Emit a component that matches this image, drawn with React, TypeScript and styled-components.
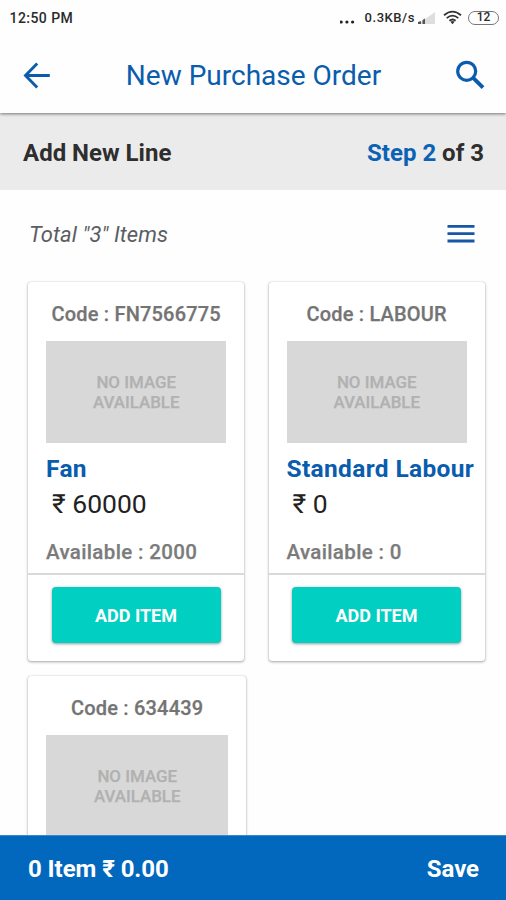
import React from "react";
import styled, { createGlobalStyle } from "styled-components";

const BLUE = "#0a5cad";

const GlobalStyle = createGlobalStyle`
  * { box-sizing: border-box; }
  body { margin: 0; background: #fefefe; font-family: Roboto, "Noto Sans", sans-serif; }
`;

const Screen = styled.div`
  width: 506px;
  height: 900px;
  display: flex;
  flex-direction: column;
  overflow: hidden;
  background: #fefefe;
`;

const StatusBar = styled.div`
  height: 36px;
  flex: none;
  display: flex;
  align-items: center;
  padding: 0 7px 1px 9.5px;
  color: #2a2a2a;
  font-size: 14px;
  font-weight: 500;
  white-space: nowrap;
`;

const Clock = styled.span`
  letter-spacing: 0.45px;
  margin-right: auto;
`;

const Speed = styled.span`
  font-size: 13px;
  letter-spacing: 0.55px;
  margin: 0 3px 0 9px;
`;

const WifiIcon = styled.svg`
  margin: 0 6px 0 7px;
`;

const Battery = styled.span`
  width: 31px;
  height: 14px;
  border: 1.5px solid #777;
  border-radius: 7px;
  display: flex;
  align-items: center;
  justify-content: center;
  font-size: 12px;
  line-height: 11px;
`;

const AppBar = styled.header`
  height: 77px;
  flex: none;
  display: flex;
  align-items: center;
  justify-content: space-between;
  padding: 1px 18px 0 19px;
  position: relative;
  color: ${BLUE};
  background: #fefefe;
  box-shadow: 0 1px 3px rgba(0, 0, 0, 0.5);
  clip-path: inset(0 0 -8px 0);
`;

const Title = styled.h1`
  margin: 0;
  padding-top: 1px;
  font-size: 28px;
  line-height: 36px;
  font-weight: 400;
`;

const StepBar = styled.div`
  height: 77px;
  flex: none;
  display: flex;
  align-items: center;
  justify-content: space-between;
  padding: 2px 22px 0 23px;
  background: #ebebeb;
  color: #2e2e2e;
  font-size: 24px;
  font-weight: 700;
`;

const StepNumber = styled.span`
  color: #0b62b4;
`;

const Summary = styled.div`
  height: 92px;
  flex: none;
  display: flex;
  align-items: center;
  justify-content: space-between;
  padding: 0 31px 4px 29px;
  color: #5b5d62;
  font-size: 22px;
  font-style: italic;
  letter-spacing: 0.08px;
`;

const Grid = styled.main`
  flex: 1;
  min-height: 0;
  display: grid;
  grid-template-columns: 216px 216px;
  grid-template-rows: 379px 379px;
  gap: 15px 24.5px;
  padding: 0 0 0 28px;
`;

const Card = styled.article<{ $wide?: boolean }>`
  width: ${(p) => (p.$wide ? 218 : 216)}px;
  background: #fff;
  border-radius: 3px;
  box-shadow: 0 1px 3px rgba(0, 0, 0, 0.34), 0 0 1px rgba(0, 0, 0, 0.25);
  display: flex;
  flex-direction: column;
`;

const Details = styled.div`
  height: 293px;
  padding: 0 17.6px 0 18px;
  border-bottom: 2px solid #d9d9d9;
  display: flex;
  flex-direction: column;
  white-space: nowrap;
`;

const Code = styled.div`
  height: 59px;
  flex: none;
  padding-top: 5px;
  line-height: 55px;
  text-align: center;
  color: #747474;
  font-size: 20px;
  font-weight: 500;
  letter-spacing: 0.18px;
  -webkit-text-stroke: 0.25px currentColor;
`;

const Placeholder = styled.div`
  height: 102px;
  flex: none;
  background: #d8d8d8;
  color: #b1b1b1;
  display: flex;
  align-items: center;
  justify-content: center;
  text-align: center;
  font-size: 16.9px;
  line-height: 20px;
  font-weight: 500;
  -webkit-text-stroke: 0.25px currentColor;
`;

const Name = styled.div`
  margin-top: 9px;
  color: ${BLUE};
  font-size: 24.5px;
  line-height: 34px;
  font-weight: 700;
  letter-spacing: 0.35px;
`;

const Price = styled.div`
  padding-left: 6px;
  color: #222;
  font-size: 26.5px;
  line-height: 36px;
`;

const Stock = styled.div`
  margin-top: 15px;
  color: #7b7b7b;
  font-size: 20.5px;
  line-height: 30px;
  font-weight: 500;
  letter-spacing: 0.35px;
  -webkit-text-stroke: 0.25px currentColor;
`;

const AddButton = styled.button`
  width: 169px;
  height: 56px;
  margin: 12px 0 0 23.5px;
  border: 0;
  border-radius: 4px;
  background: #00cfc1;
  color: #fff;
  font: 700 18px/56px Roboto, sans-serif;
  padding: 1px 0 0;
  box-shadow: 0 1px 3px rgba(0, 0, 0, 0.4);
`;

const Footer = styled.footer`
  height: 65px;
  flex: none;
  position: relative;
  display: flex;
  align-items: center;
  justify-content: space-between;
  padding: 2px 27px 0 28px;
  border-top: 1px solid #3d87c5;
  background: #0168bd;
  color: #fff;
  font-size: 24px;
  font-weight: 700;
  letter-spacing: -0.06px;
`;

const items = [
  { code: "FN7566775", name: "Fan", price: "60000", stock: "2000" },
  { code: "LABOUR", name: "Standard Labour", price: "0", stock: "0" },
  { code: "634439", name: "", price: "", stock: "" },
];

function StatusIcons() {
  return (
    <>
      <svg width="16" height="14" viewBox="0 0 16 14" fill="#222">
        <circle cx="1.2" cy="11" r="1.6" />
        <circle cx="6.9" cy="11" r="1.6" />
        <circle cx="12.6" cy="11" r="1.6" />
      </svg>
      <Speed>0.3KB/s</Speed>
      <svg width="18" height="14" viewBox="0 0 18 14">
        <path d="M0 13 17 1V13Z" fill="#dedede" />
        <path d="M0 13V11L3 10V13ZM4.5 13V9L7 7.5V13Z" fill="#555" />
      </svg>
      <WifiIcon width="19" height="15" viewBox="0 0 19 15" fill="none" stroke="#333" strokeWidth="1.8">
        <path d="M1 5.3Q9.5-2 18 5.3M3.7 8.1Q9.5 3.2 15.3 8.1M6.4 10.8Q9.5 8.2 12.6 10.8" />
        <path d="M7.4 11.7 9.5 14.2 11.6 11.7Q9.5 10.2 7.4 11.7Z" fill="#333" stroke="none" />
      </WifiIcon>
      <Battery>12</Battery>
    </>
  );
}

export default function App() {
  return (
    <Screen>
      <GlobalStyle />
      <StatusBar>
        <Clock>12:50 PM</Clock>
        <StatusIcons />
      </StatusBar>
      <AppBar>
        <svg width="36" height="36" viewBox="0 0 36 36" fill="none" stroke={BLUE} strokeWidth="2.9">
          <path d="M30.8 18.5H7M18.2 6.6 6.5 18.5 18.2 30.4" />
        </svg>
        <Title>New Purchase Order</Title>
        <svg width="36" height="36" viewBox="0 0 36 36" fill="none" stroke={BLUE}>
          <circle cx="14.7" cy="14.3" r="9" strokeWidth="3.2" />
          <path d="M21.2 20.8 31 30.6" strokeWidth="3.9" />
        </svg>
      </AppBar>
      <StepBar>
        <span>Add New Line</span>
        <span><StepNumber>Step 2</StepNumber> of 3</span>
      </StepBar>
      <Summary>
        <span>Total "3" Items</span>
        <svg width="28" height="20" viewBox="0 0 28 20" stroke="#1756a8" strokeWidth="2.8">
          <path d="M.5 2.4H27.5M.5 9.7H27.5M.5 17H27.5" />
        </svg>
      </Summary>
      <Grid>
        {items.map((item, i) => (
          <Card key={item.code} $wide={i === 2}>
            <Details>
              <Code>Code : {item.code}</Code>
              <Placeholder>NO IMAGE<br />AVAILABLE</Placeholder>
              {item.name && (
                <>
                  <Name>{item.name}</Name>
                  <Price>₹ {item.price}</Price>
                  <Stock>Available : {item.stock}</Stock>
                </>
              )}
            </Details>
            {item.name && <AddButton>ADD ITEM</AddButton>}
          </Card>
        ))}
      </Grid>
      <Footer>
        <span>0 Item ₹ 0.00</span>
        <span>Save</span>
      </Footer>
    </Screen>
  );
}
